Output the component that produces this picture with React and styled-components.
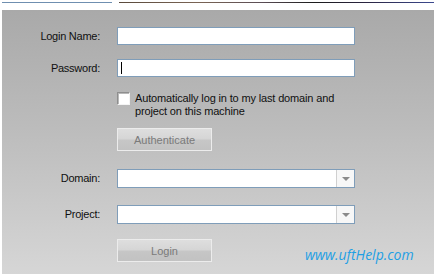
import React from "react";
import styled, { createGlobalStyle } from "styled-components";

const GlobalStyle = createGlobalStyle`
body{
  margin:0;
  background:#ffffff;
  font-family:"Liberation Sans", Arial, sans-serif;
}
`;

const Page = styled.div`
  width: 436px;
  height: 276px;
  position: relative;
  box-sizing: border-box;
  padding: 2px 2px 2px 2px;
  display: flex;
  flex-direction: column;
`;

const TopStrip = styled.div`
  display: flex;
  gap: 7px;
  height: 1px;
  margin-bottom: 7px;
`;

const TabLine = styled.div`
  width: 110px;
  background: #6f8fb0;
`;

const ImageLine = styled.div`
  flex: 1;
  background: linear-gradient(90deg, #5a4a3c 0%, #7a6454 25%, #5c4e56 45%, #1c1c1c 62%, #2a2440 78%, #3c4a90 100%);
`;

const Panel = styled.div`
  flex: 1;
  background: linear-gradient(180deg, #a9a9a9 0%, #bcbcbc 45%, #d6d6d6 100%);
  padding-top: 17px;
  display: flex;
  flex-direction: column;
`;

const Row = styled.div`
  display: grid;
  grid-template-columns: 98px 238px;
  column-gap: 17px;
  align-items: center;
  margin-top: ${(p) => p.$gap || 0}px;
`;

const Label = styled.label`
  font-size: 11px;
  letter-spacing: -0.25px;
  color: #101010;
  text-align: right;
  line-height: 13px;
`;

const TextBox = styled.div`
  height: 18px;
  box-sizing: border-box;
  border: 1px solid #7f9db9;
  background: #ffffff;
  display: flex;
  align-items: center;
  padding-left: 3px;
`;

const Caret = styled.span`
  width: 1px;
  height: 12px;
  background: #000000;
`;

const Combo = styled.div`
  height: ${(p) => p.$h}px;
  box-sizing: border-box;
  border: 1px solid #7f9db9;
  background: #ffffff;
  display: flex;
  justify-content: flex-end;
`;

const ComboButton = styled.div`
  width: 17px;
  border-left: 1px solid #d0d0d0;
  background: #f7f7f7;
  display: flex;
  align-items: center;
  justify-content: center;
`;

const Arrow = styled.span`
  width: 0;
  height: 0;
  border-left: 4px solid transparent;
  border-right: 4px solid transparent;
  border-top: 4px solid #8a8a8a;
`;

const CheckWrap = styled.div`
  display: flex;
  align-items: flex-start;
  gap: 5px;
`;

const CheckBox = styled.span`
  width: 13px;
  height: 13px;
  box-sizing: border-box;
  flex: none;
  border: 1px solid #8e8e8e;
  border-right-color: #f4f4f4;
  border-bottom-color: #f4f4f4;
  background: #ffffff;
  box-shadow: inset 1px 1px 0 #b8b8b8;
`;

const CheckText = styled.span`
  font-size: 11px;
  letter-spacing: -0.15px;
  line-height: 13px;
  color: #101010;
`;

const Button = styled.button`
  width: 95px;
  height: 23px;
  box-sizing: border-box;
  border: 1px solid #ececec;
  border-radius: 0;
  padding: 0;
  background: linear-gradient(180deg, #dedede 0%, #d6d6d6 45%, #c6c6c6 55%, #c2c2c2 100%);
  color: #7a7a7a;
  font-family: "Liberation Sans", Arial, sans-serif;
  font-size: 11px;
`;

const Watermark = styled.div`
  position: absolute;
  left: 305px;
  top: 245px;
  font-family: "Open Sans", "DejaVu Sans", sans-serif;
  font-style: italic;
  font-size: 14px;
  line-height: 20px;
  color: #1e9fe4;
`;

function App() {
  return (
    <>
      <GlobalStyle />
      <Page>
        <TopStrip>
          <TabLine />
          <ImageLine />
        </TopStrip>
        <Panel>
          <Row>
            <Label>Login Name:</Label>
            <TextBox />
          </Row>
          <Row $gap={14}>
            <Label>Password:</Label>
            <TextBox>
              <Caret />
            </TextBox>
          </Row>
          <Row $gap={15}>
            <span />
            <CheckWrap>
              <CheckBox />
              <CheckText>
                Automatically log in to my last domain and
                <br />
                project on this machine
              </CheckText>
            </CheckWrap>
          </Row>
          <Row $gap={10}>
            <span />
            <Button>Authenticate</Button>
          </Row>
          <Row $gap={18}>
            <Label>Domain:</Label>
            <Combo $h={19}>
              <ComboButton>
                <Arrow />
              </ComboButton>
            </Combo>
          </Row>
          <Row $gap={17}>
            <Label>Project:</Label>
            <Combo $h={19}>
              <ComboButton>
                <Arrow />
              </ComboButton>
            </Combo>
          </Row>
          <Row $gap={15}>
            <span />
            <Button>Login</Button>
          </Row>
        </Panel>
        <Watermark>www.uftHelp.com</Watermark>
      </Page>
    </>
  );
}

export default App;
